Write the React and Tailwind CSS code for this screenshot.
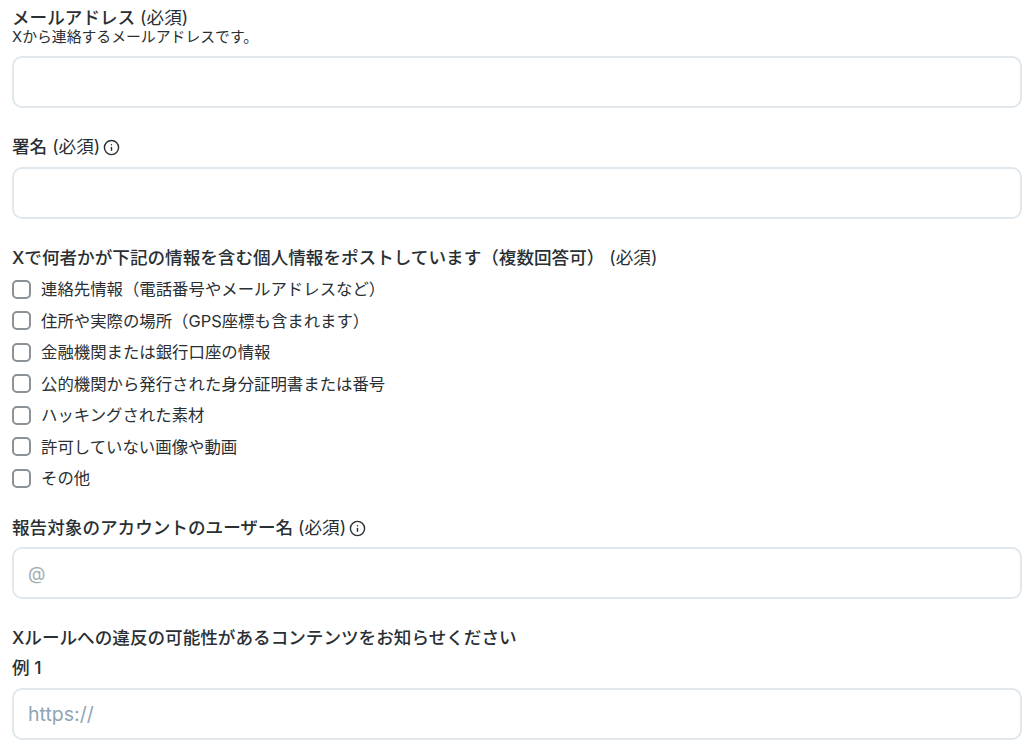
import { Info } from "lucide-react";

const opciones = [
  "連絡先情報（電話番号やメールアドレスなど）",
  "住所や実際の場所（GPS座標も含まれます）",
  "金融機関または銀行口座の情報",
  "公的機関から発行された身分証明書または番号",
  "ハッキングされた素材",
  "許可していない画像や動画",
  "その他",
];

function Required() {
  return <span className="font-normal"> (必須)</span>;
}

function Field({ placeholder, muted }) {
  return (
    <input
      placeholder={placeholder}
      className={`block h-[52px] w-full rounded-[10px] border-2 border-[#e1e8ed] bg-white px-[14px] text-[#292f33] outline-none ${muted ? "text-[18px] placeholder:text-[#a3adb5]" : "text-[19.5px] placeholder:text-[#8fa5b5]"}`}
    />
  );
}

export default function App() {
  return (
    <div className="min-h-[741px] overflow-hidden bg-white pl-3 pr-0.5 pt-2 font-['Inter','Noto_Sans_CJK_JP',sans-serif] text-[#292f33]">
      <label className="block text-[17.6px] font-medium leading-5">
        メールアドレス
        <Required />
      </label>
      <p className="mt-px text-[14.85px] leading-4">Xから連絡するメールアドレスです。</p>
      <div className="mt-[11px]">
        <Field />
      </div>

      <label className="mt-[29px] flex items-center gap-[3px] text-[17.6px] font-medium leading-5">
        <span>
          署名
          <Required />
        </span>
        <Info size={17} strokeWidth={2} />
      </label>
      <div className="mt-[10px]">
        <Field />
      </div>

      <label className="mt-[29px] block text-[17.6px] font-medium leading-5">
        Xで何者かが下記の情報を含む個人情報をポストしています（複数回答可）
        <Required />
      </label>
      <div className="mt-[9px] flex flex-col gap-[7.5px]">
        {opciones.map((opcion) => (
          <label key={opcion} className="flex items-center text-[16.4px] leading-[24px]">
            <input
              type="checkbox"
              className="mr-[10px] h-[19px] w-[19px] appearance-none rounded-[5px] border-2 border-[#8a9197] bg-white"
            />
            {opcion}
          </label>
        ))}
      </div>

      <label className="mt-[28px] flex items-center gap-[3px] text-[17.6px] font-medium leading-5">
        <span>
          報告対象のアカウントのユーザー名
          <Required />
        </span>
        <Info size={17} strokeWidth={2} />
      </label>
      <div className="mt-[9px]">
        <Field placeholder="@" muted />
      </div>

      <label className="mt-[29px] block text-[17.6px] font-medium leading-5">
        Xルールへの違反の可能性があるコンテンツをお知らせください
      </label>
      <label className="mt-[10px] block text-[17.6px] font-medium leading-5">例 1</label>
      <div className="mt-[10px]">
        <Field placeholder="https://" />
      </div>
    </div>
  );
}
